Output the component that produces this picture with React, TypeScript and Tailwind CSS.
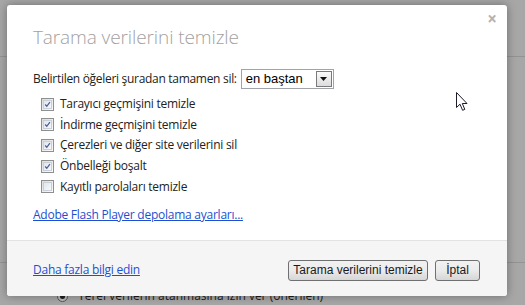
import React from "react";

const items = [
  { label: "Tarayıcı geçmişini temizle", checked: true },
  { label: "İndirme geçmişini temizle", checked: true },
  { label: "Çerezleri ve diğer site verilerini sil", checked: true },
  { label: "Önbelleği boşalt", checked: true },
  { label: "Kayıtlı parolaları temizle", checked: false },
];

function CheckBox({ checked }: { checked: boolean }) {
  return (
    <span className="flex h-[13px] w-[13px] items-center justify-center border border-[#8e8f8f] bg-gradient-to-br from-[#dcdcdc] to-[#fbfbfb]">
      <span className="flex h-[9px] w-[9px] items-center justify-center border border-[#c9cfd6] bg-gradient-to-br from-[#e1e6ee] to-[#f7f8fa]">
        {checked && (
          <svg width="9" height="9" viewBox="0 0 9 9">
            <path
              d="M1.5 4.5 L3.6 6.8 L7.6 1.6"
              fill="none"
              stroke="#4a5f97"
              strokeWidth="1.6"
            />
          </svg>
        )}
      </span>
    </span>
  );
}

function Cursor() {
  return (
    <svg width="13" height="20" viewBox="0 0 13 20">
      <path
        d="M0.5 0.5 L0.5 15.5 L4 12.2 L6.6 18.3 L8.8 17.4 L6.3 11.5 L11 11.5 Z"
        fill="#ffffff"
        stroke="#1b1b2b"
        strokeWidth="1"
        strokeLinejoin="round"
      />
    </svg>
  );
}

export default function App() {
  return (
    <div className="relative h-[305px] w-[525px] overflow-hidden bg-[#a7a7a7] font-['Open_Sans',sans-serif]">
      {/* dimmed page behind the dialog */}
      <div className="flex h-full flex-col">
        <div className="h-[58px] border-b border-[#939393]" />
        <div className="h-[212px] border-b border-[#939393]" />
        <div className="flex items-center gap-[10px] pl-[57px] pt-[24px]">
          <span className="flex h-[11px] w-[11px] items-center justify-center rounded-full border border-[#555] bg-[#bdbdbd]">
            <span className="h-[5px] w-[5px] rounded-full bg-[#1e1e1e]" />
          </span>
          <span className="text-[12px] text-[#1c1c1c]">
            Yerel verilerin atanmasına izin ver (önerilen)
          </span>
        </div>
      </div>

      {/* dialog */}
      <div className="absolute left-[7px] top-[5px] flex h-[291px] w-[500px] flex-col overflow-hidden rounded-[3px] bg-white shadow-[0_0_10px_rgba(0,0,0,0.35)]">
        <div className="flex flex-1 flex-col pl-[26px] pr-[10px]">
          <div className="flex items-start justify-between">
            <h1 className="mt-[18px] text-[19px] font-light tracking-[-0.1px] text-[#a2a2a2]">
              Tarama verilerini temizle
            </h1>
            <span className="mt-[5px] text-[17px] font-bold leading-none text-[#b3b3b3]">
              ×
            </span>
          </div>

          <div className="mt-[17px] flex items-center gap-[4px] text-[12px] tracking-[-0.3px] text-[#222]">
            <span>Belirtilen öğeleri şuradan tamamen sil:</span>
            <div className="flex h-[20px] w-[93px] items-center justify-between border border-[#a0a4aa] bg-white pl-[4px] pr-px font-['Liberation_Sans',sans-serif] text-[13px] tracking-normal text-black">
              <span>en baştan</span>
              <span className="flex h-[16px] w-[16px] items-center justify-center border border-[#7a7a7a] bg-gradient-to-b from-[#fbfbfb] to-[#dcdcdc]">
                <svg width="7" height="4" viewBox="0 0 7 4">
                  <path d="M0 0 L7 0 L3.5 4 Z" fill="#111" />
                </svg>
              </span>
            </div>
          </div>

          <div className="mt-[9px] flex flex-col gap-[7.7px] pl-[8px]">
            {items.map((item) => (
              <label
                key={item.label}
                className="flex h-[13px] items-center gap-[6px] text-[12px] tracking-[-0.25px] text-[#222]"
              >
                <CheckBox checked={item.checked} />
                <span>{item.label}</span>
              </label>
            ))}
          </div>

          <a
            href="#"
            className="mt-[13px] self-start text-[12px] tracking-[-0.25px] text-[#1f4fd1] underline"
          >
            Adobe Flash Player depolama ayarları...
          </a>
        </div>

        <div className="flex h-[56px] items-center justify-between border-t border-[#e2e2e2] bg-[#f5f5f5] pl-[26px] pr-[27px] pt-[3px]">
          <a
            href="#"
            className="text-[12px] tracking-[-0.25px] text-[#1f4fd1] underline"
          >
            Daha fazla bilgi edin
          </a>
          <div className="flex gap-[7px] font-['Liberation_Sans',sans-serif] text-[12px] text-[#1a1a1a]">
            <button className="h-[21px] w-[140px] rounded-[3px] border border-[#707070] bg-gradient-to-b from-[#f2f2f2] via-[#ebebeb] to-[#d6d6d6]">
              Tarama verilerini temizle
            </button>
            <button className="h-[21px] w-[45px] rounded-[3px] border border-[#707070] bg-gradient-to-b from-[#f2f2f2] via-[#ebebeb] to-[#d6d6d6]">
              İptal
            </button>
          </div>
        </div>
      </div>

      <div className="absolute left-[456px] top-[92px]">
        <Cursor />
      </div>
    </div>
  );
}
